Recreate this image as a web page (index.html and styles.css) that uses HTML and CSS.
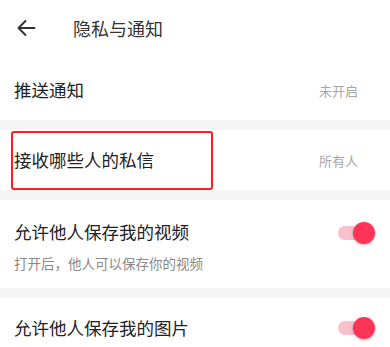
FILE: index.html
```html
<!DOCTYPE html>
<html lang="zh">
<head>
<meta charset="utf-8">
<link rel="stylesheet" href="styles.css">
</head>
<body>
<div class="page">
  <header class="header">
    <svg class="back" width="20" height="18" viewBox="0 0 20 18" aria-hidden="true">
      <path d="M18.5 9H2.5M9.5 2L2.5 9l7 7" fill="none" stroke="#333" stroke-width="2" stroke-linecap="round" stroke-linejoin="round"/>
    </svg>
    <h1 class="title">隐私与通知</h1>
  </header>

  <div class="row">
    <span class="label">推送通知</span>
    <span class="value">未开启</span>
  </div>
  <div class="gap"></div>

  <div class="row">
    <span class="label">接收哪些人的私信</span>
    <span class="value">所有人</span>
  </div>
  <div class="gap"></div>

  <div class="row row-tall">
    <div class="texts">
      <span class="label">允许他人保存我的视频</span>
      <span class="sub">打开后，他人可以保存你的视频</span>
    </div>
    <span class="toggle"><span class="knob"></span></span>
  </div>
  <div class="gap"></div>

  <div class="row">
    <span class="label">允许他人保存我的图片</span>
    <span class="toggle"><span class="knob"></span></span>
  </div>

  <div class="highlight"></div>
</div>
</body>
</html>
```
FILE: styles.css
```css
* { box-sizing: border-box; }
html, body { margin: 0; padding: 0; background: #fff; }
body {
  font-family: "Noto Sans CJK SC", "Noto Sans", sans-serif;
  color: #222;
}
.page {
  position: relative;
  width: 390px;
  height: 347px;
  overflow: hidden;
}
.header {
  height: 60px;
  padding-bottom: 4px;
  display: flex;
  align-items: center;
}
.back {
  margin-left: 16px;
  display: block;
}
.title {
  margin: 0 0 0 37px;
  font-size: 18px;
  font-weight: 400;
  color: #333;
  line-height: 24px;
}
.row {
  height: 60px;
  padding: 0 14px;
  display: flex;
  align-items: center;
  justify-content: space-between;
}
.row-tall {
  height: 88px;
  align-items: flex-start;
  padding-top: 20px;
}
.texts {
  display: flex;
  flex-direction: column;
}
.label {
  font-size: 17.5px;
  line-height: 24px;
  color: #222;
}
.sub {
  margin-top: 10px;
  font-size: 13.5px;
  line-height: 18px;
  color: #888;
}
.value {
  font-size: 13px;
  color: #a6a6a6;
  margin-right: 18px;
}
.gap {
  height: 10px;
  background: #f5f5f5;
}
.toggle {
  position: relative;
  width: 28px;
  height: 14px;
  border-radius: 7px;
  background: #fcc0cc;
  margin-right: 10px;
}
.row-tall .toggle { margin-top: 6px; }
.knob {
  position: absolute;
  right: -9px;
  top: -4px;
  width: 22px;
  height: 22px;
  border-radius: 50%;
  background: #fe3459;
  box-shadow: 0 1px 3px rgba(0,0,0,0.3);
}
.highlight {
  position: absolute;
  left: 11px;
  top: 131px;
  width: 202px;
  height: 59px;
  border: 2px solid #f5221f;
  border-radius: 3px;
}
```
